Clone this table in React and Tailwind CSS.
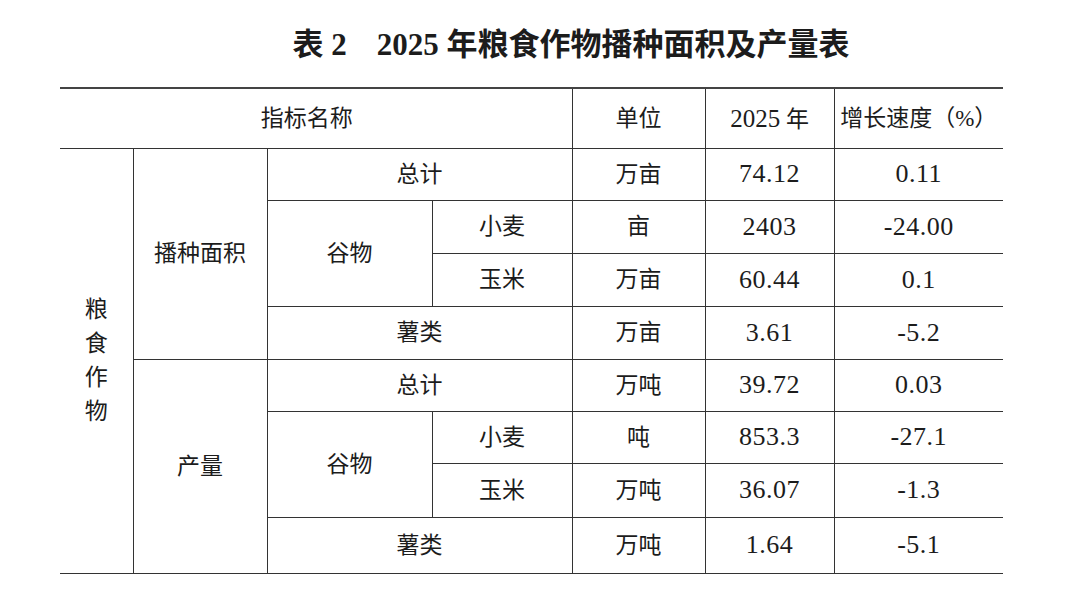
import React from 'react';

const rows = [
  { unit: '万亩', value: '74.12', rate: '0.11' },
  { unit: '亩', value: '2403', rate: '-24.00' },
  { unit: '万亩', value: '60.44', rate: '0.1' },
  { unit: '万亩', value: '3.61', rate: '-5.2' },
  { unit: '万吨', value: '39.72', rate: '0.03' },
  { unit: '吨', value: '853.3', rate: '-27.1' },
  { unit: '万吨', value: '36.07', rate: '-1.3' },
  { unit: '万吨', value: '1.64', rate: '-5.1' },
];

const heights = ['h-[52px]', 'h-[53px]', 'h-[53px]', 'h-[53px]', 'h-[52px]', 'h-[52px]', 'h-[54px]', 'h-[56px]'];

function Nums({ r }) {
  return (
    <>
      <td className="border border-[#333]">{r.unit}</td>
      <td className="border border-[#333] text-[26px] tracking-[0.5px]">{r.value}</td>
      <td className="border border-[#333] border-r-0 text-[26px] tracking-[0.5px]">{r.rate}</td>
    </>
  );
}

export default function App() {
  return (
    <div className="w-[1080px] h-[599px] bg-white text-[#1c1c1c] font-['Liberation_Serif','Noto_Sans_CJK_SC',serif]">
      <h1 className="pt-[27px] pl-[62px] h-[87px] text-center text-[31px] font-bold leading-[36px]">
        表 2<span className="inline-block w-[30px]"></span>2025 年粮食作物播种面积及产量表
      </h1>

      <table className="ml-[60px] w-[943px] table-fixed border-collapse text-center text-[23px] leading-none">
        <colgroup>
          <col className="w-[73px]" />
          <col className="w-[134px]" />
          <col className="w-[165px]" />
          <col className="w-[140px]" />
          <col className="w-[133px]" />
          <col className="w-[129px]" />
          <col className="w-[169px]" />
        </colgroup>
        <thead>
          <tr className="h-[60px] border-t-2 border-[#444]">
            <th colSpan={4} className="font-normal border-b border-r border-[#333] pr-[18px]">指标名称</th>
            <th className="font-normal border-b border-r border-[#333]">单位</th>
            <th className="font-normal border-b border-r border-[#333]"><span className="text-[25px]">2025</span> 年</th>
            <th className="font-normal border-b border-[#333]">增长速度（%）</th>
          </tr>
        </thead>
        <tbody>
          <tr className={heights[0]}>
            <td rowSpan={8} className="border-b border-r border-[#333]">
              <div className="flex flex-col items-center gap-[11px] leading-[23px]">
                <span>粮</span>
                <span>食</span>
                <span>作</span>
                <span>物</span>
              </div>
            </td>
            <td rowSpan={4} className="border border-[#333]">播种面积</td>
            <td colSpan={2} className="border border-[#333]">总计</td>
            <Nums r={rows[0]} />
          </tr>
          <tr className={heights[1]}>
            <td rowSpan={2} className="border border-[#333]">谷物</td>
            <td className="border border-[#333]">小麦</td>
            <Nums r={rows[1]} />
          </tr>
          <tr className={heights[2]}>
            <td className="border border-[#333]">玉米</td>
            <Nums r={rows[2]} />
          </tr>
          <tr className={heights[3]}>
            <td colSpan={2} className="border border-[#333]">薯类</td>
            <Nums r={rows[3]} />
          </tr>
          <tr className={heights[4]}>
            <td rowSpan={4} className="border border-[#333]">产量</td>
            <td colSpan={2} className="border border-[#333]">总计</td>
            <Nums r={rows[4]} />
          </tr>
          <tr className={heights[5]}>
            <td rowSpan={2} className="border border-[#333]">谷物</td>
            <td className="border border-[#333]">小麦</td>
            <Nums r={rows[5]} />
          </tr>
          <tr className={heights[6]}>
            <td className="border border-[#333]">玉米</td>
            <Nums r={rows[6]} />
          </tr>
          <tr className={`${heights[7]} border-b border-[#333]`}>
            <td colSpan={2} className="border border-[#333]">薯类</td>
            <Nums r={rows[7]} />
          </tr>
        </tbody>
      </table>
    </div>
  );
}
